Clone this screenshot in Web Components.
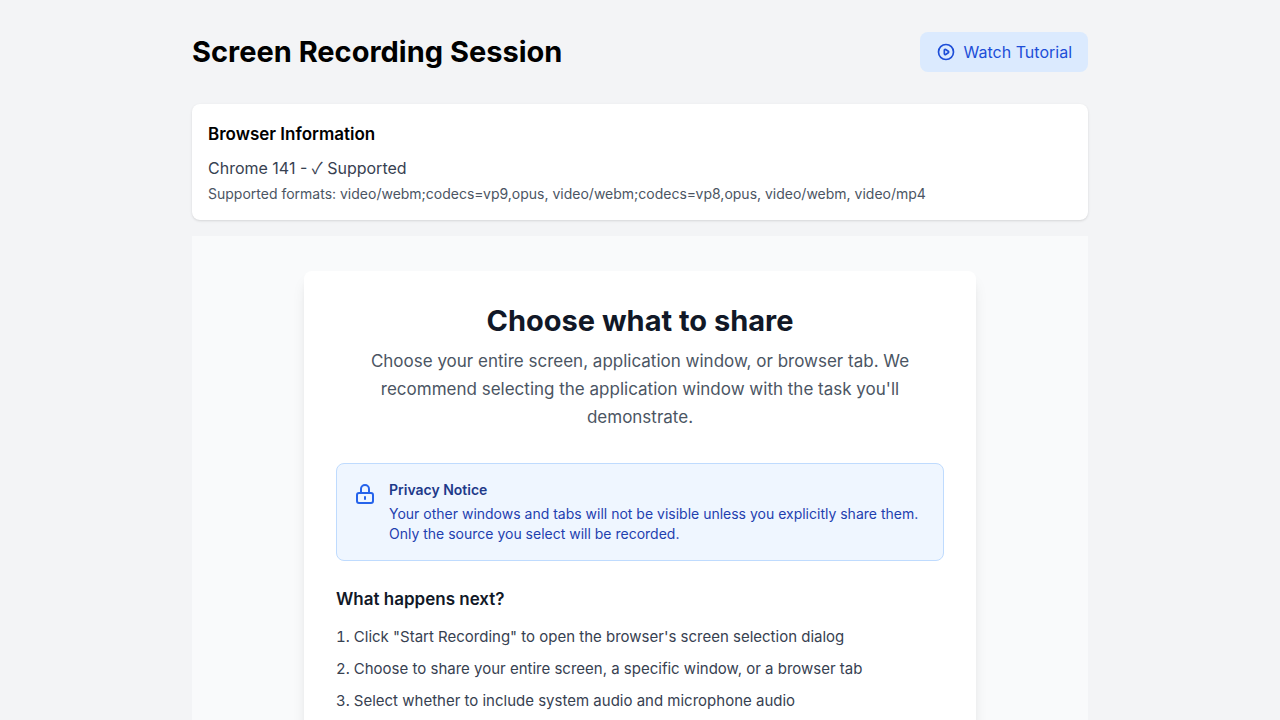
<!DOCTYPE html>
<html lang="en">
<head>
<meta charset="utf-8">
<meta name="viewport" content="width=device-width, initial-scale=1">
<title>Screen Recording Session</title>
<style>
  body {
    margin: 0;
    min-height: 100vh;
    background: #f3f4f6;
    color: #000;
    font-family: Inter, "Liberation Sans", sans-serif;
    font-size: 16px;
    line-height: 24px;
  }
  .check { font-family: "Noto Sans CJK JP", sans-serif; line-height: 1; }
</style>
</head>
<body>
<recording-page>
  <page-header slot="header" heading="Screen Recording Session">
    <tutorial-button>Watch Tutorial</tutorial-button>
  </page-header>
  <browser-info slot="info" heading="Browser Information">
    <span slot="status">Chrome 141 - <span class="check">✓</span> Supported</span>
    <span slot="formats">Supported formats: video/webm;codecs=vp9,opus, video/webm;codecs=vp8,opus, video/webm, video/mp4</span>
  </browser-info>
  <share-card heading="Choose what to share">
    <span slot="intro">Choose your entire screen, application window, or browser tab. We recommend selecting the application window with the task you'll demonstrate.</span>
    <privacy-notice heading="Privacy Notice">Your other windows and tabs will not be visible unless you explicitly share them. Only the source you select will be recorded.</privacy-notice>
    <next-steps heading="What happens next?"></next-steps>
  </share-card>
</recording-page>

<script>
  const base = `
    :host, *, *::before, *::after { box-sizing: border-box; }
    h1, h2, h3, h4, p, ol { margin: 0; padding: 0; }
  `;

  function define(name, css, html) {
    customElements.define(name, class extends HTMLElement {
      constructor() {
        super();
        const template = document.createElement('template');
        template.innerHTML = `<style>${base}${css}</style>${html}`;
        this.attachShadow({ mode: 'open' }).append(template.content.cloneNode(true));
      }
      connectedCallback() {
        const heading = this.shadowRoot.querySelector('[data-heading]');
        if (heading) heading.textContent = this.getAttribute('heading');
      }
    });
  }

  define('recording-page', `
    :host { display: block; max-width: 896px; margin: 0 auto; padding-top: 32px; }
    .info { padding: 32px 0 16px; }
    main { padding: 35px 16px; background: #f9fafb; }
  `, `
    <slot name="header"></slot>
    <div class="info"><slot name="info"></slot></div>
    <main><slot></slot></main>
  `);

  define('page-header', `
    :host { display: flex; align-items: center; justify-content: space-between; gap: 16px; }
    h1 { font-size: 29px; line-height: 36px; font-weight: 700; }
  `, `<h1 data-heading></h1><slot></slot>`);

  define('tutorial-button', `
    :host { display: block; }
    button {
      display: flex; align-items: center; gap: 8px;
      padding: 8px 16px; border: 0; border-radius: 8px;
      background: #dbeafe; color: #1d4ed8;
      font: inherit; cursor: pointer;
    }
    button:hover { background: #bfdbfe; }
    svg { width: 20px; height: 20px; }
  `, `
    <button type="button">
      <svg viewBox="0 0 24 24" fill="none" stroke="currentColor" stroke-width="2" stroke-linecap="round" stroke-linejoin="round" aria-hidden="true">
        <path d="M14.752 11.168l-3.197-2.132A1 1 0 0010 9.87v4.263a1 1 0 001.555.832l3.197-2.132a1 1 0 000-1.664z"/>
        <path d="M21 12a9 9 0 11-18 0 9 9 0 0118 0z"/>
      </svg>
      <slot></slot>
    </button>
  `);

  define('browser-info', `
    :host {
      display: block; padding: 16px; border-radius: 8px; background: #fff;
      box-shadow: 0 1px 3px rgba(0, 0, 0, .1), 0 1px 2px -1px rgba(0, 0, 0, .1);
    }
    h2 { margin-bottom: 8px; font-size: 17px; line-height: 28px; font-weight: 600; }
    .status { color: #374151; }
    .formats { margin-top: 4px; font-size: 14px; line-height: 20px; color: #4b5563; }
  `, `
    <h2 data-heading></h2>
    <p class="status"><slot name="status"></slot></p>
    <p class="formats"><slot name="formats"></slot></p>
  `);

  define('share-card', `
    :host {
      display: block; max-width: 672px; margin: 0 auto; padding: 32px;
      border-radius: 8px; background: #fff; color: #111827;
      box-shadow: 0 10px 15px -3px rgba(0, 0, 0, .1), 0 4px 6px -4px rgba(0, 0, 0, .1);
    }
    header { margin-bottom: 32px; text-align: center; }
    h2 { margin-bottom: 8px; font-size: 29px; line-height: 36px; font-weight: 700; }
    p { font-size: 17px; line-height: 28px; color: #4b5563; }
  `, `
    <header>
      <h2 data-heading></h2>
      <p><slot name="intro"></slot></p>
    </header>
    <slot></slot>
  `);

  define('privacy-notice', `
    :host {
      display: flex; align-items: flex-start; gap: 12px;
      margin-bottom: 24px; padding: 16px;
      border: 1px solid #bfdbfe; border-radius: 8px; background: #eff6ff;
      font-size: 14px; line-height: 20px;
    }
    svg { flex: none; width: 24px; height: 24px; margin-top: 2px; color: #2563eb; }
    h3 { margin-bottom: 4px; font-size: 14px; font-weight: 600; color: #1e3a8a; }
    p { color: #1e40af; }
  `, `
    <svg viewBox="0 0 24 24" fill="none" stroke="currentColor" stroke-width="2" stroke-linecap="round" stroke-linejoin="round" aria-hidden="true">
      <path d="M12 15v2m-6 4h12a2 2 0 002-2v-6a2 2 0 00-2-2H6a2 2 0 00-2 2v6a2 2 0 002 2zm10-10V7a4 4 0 00-8 0v4h8z"/>
    </svg>
    <div>
      <h3 data-heading></h3>
      <p><slot></slot></p>
    </div>
  `);

  define('next-steps', `
    :host { display: block; }
    h3 { margin-bottom: 12px; font-size: 17px; line-height: 28px; font-weight: 600; }
    ol { display: grid; gap: 8px; list-style: decimal inside; font-size: 15px; color: #374151; }
  `, `
    <h3 data-heading></h3>
    <ol>
      <li>Click "Start Recording" to open the browser's screen selection dialog</li>
      <li>Choose to share your entire screen, a specific window, or a browser tab</li>
      <li>Select whether to include system audio and microphone audio</li>
    </ol>
  `);
</script>
</body>
</html>
